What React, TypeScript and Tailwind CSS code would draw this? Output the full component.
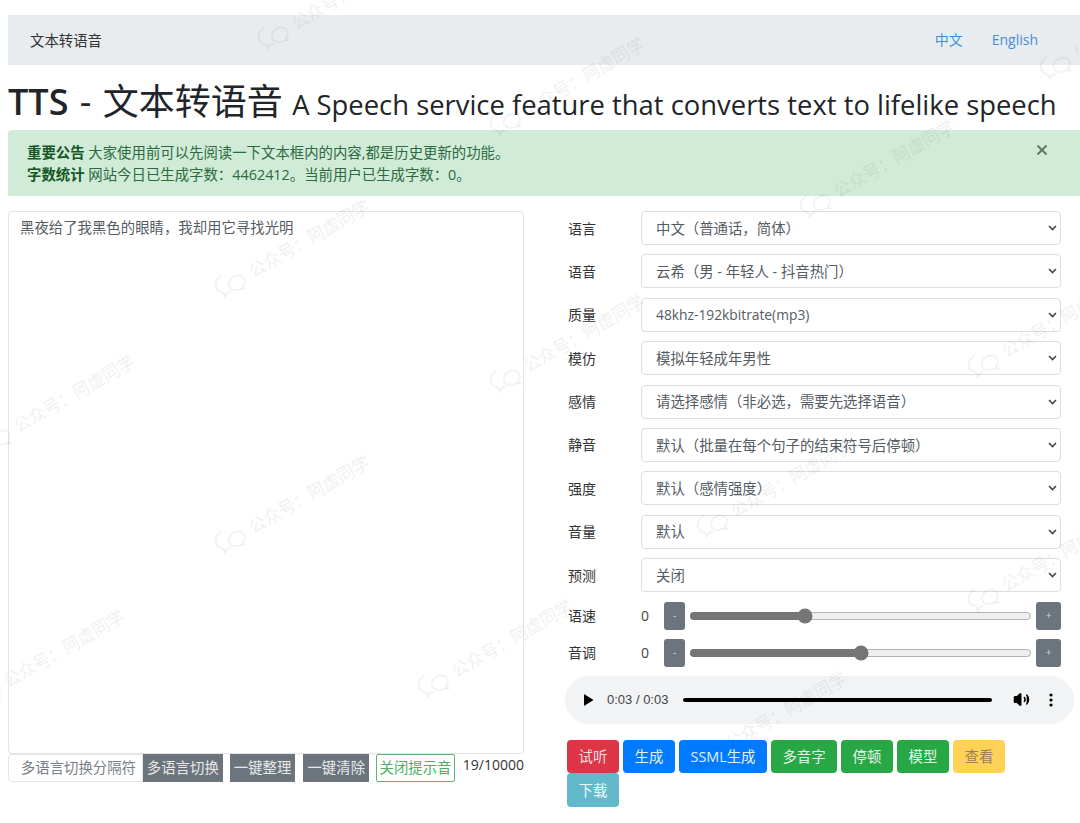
import { Volume2 } from "lucide-react";

const FONT = "font-['Open_Sans','Noto_Sans_CJK_SC',sans-serif]";

const selectRows = [
  { label: "语言", value: "中文（普通话，简体）", size: "text-[14.4px]" },
  { label: "语音", value: "云希（男 - 年轻人 - 抖音热门）", size: "text-[14.4px]" },
  { label: "质量", value: "48khz-192kbitrate(mp3)", size: "text-[13.8px]" },
  { label: "模仿", value: "模拟年轻成年男性", size: "text-[14.4px]" },
  { label: "感情", value: "请选择感情（非必选，需要先选择语音）", size: "text-[14.4px]" },
  { label: "静音", value: "默认（批量在每个句子的结束符号后停顿）", size: "text-[14.4px]" },
  { label: "强度", value: "默认（感情强度）", size: "text-[14.4px]" },
  { label: "音量", value: "默认", size: "text-[14.4px]" },
  { label: "预测", value: "关闭", size: "text-[14.4px]" },
];

const sliders = [
  { label: "语速", percent: 33 },
  { label: "音调", percent: 50 },
];

const actions = [
  { text: "试听", color: "bg-[#dc3545] text-[#f6dfe1]", width: "w-[52px]" },
  { text: "生成", color: "bg-[#007bff] text-[#e4f0ff]", width: "w-[52px]" },
  { text: "SSML生成", color: "bg-[#007bff] text-[#e4f0ff]", width: "w-[88px]" },
  { text: "多音字", color: "bg-[#28a745] text-[#e4f4e8]", width: "w-[66px]" },
  { text: "停顿", color: "bg-[#28a745] text-[#e4f4e8]", width: "w-[52px]" },
  { text: "模型", color: "bg-[#28a745] text-[#e4f4e8]", width: "w-[52px]" },
  { text: "查看", color: "bg-[#ffd257] text-[#94835a]", width: "w-[52px]" },
  { text: "下载", color: "bg-[#63b9cc] text-[#eef8fa]", width: "w-[52px]" },
];

const watermarks = [
  "left-[258px] top-[30px]",
  "left-[490px] top-[116px]",
  "left-[800px] top-[198px]",
  "left-[1040px] top-[60px]",
  "left-[215px] top-[278px]",
  "left-[490px] top-[373px]",
  "left-[968px] top-[358px]",
  "left-[697px] top-[518px]",
  "left-[215px] top-[534px]",
  "left-[968px] top-[592px]",
  "left-[418px] top-[678px]",
  "left-[692px] top-[750px]",
  "left-[-20px] top-[433px]",
  "left-[-30px] top-[688px]",
];

const Watermark = ({ place }: { place: string }) => (
  <div className={`absolute flex items-center gap-1 origin-left -rotate-[30deg] blur-[0.6px] text-[17px] leading-none whitespace-nowrap text-black/[0.07] ${place}`}>
    <svg width="36" height="28" viewBox="0 0 36 28" fill="none" stroke="currentColor" strokeWidth="1.4">
      <path d="M14 3c-6 0-11 4-11 9 0 3 2 5 4 7l-1 4 4-2c1 .4 3 .6 4 .6" />
      <path d="M24 10c-5 0-9 3-9 7s4 7 9 7l4 2-1-3c3-1 5-3 5-6 0-4-4-7-8-7z" />
    </svg>
    <span>公众号：阿虚同学</span>
  </div>
);

const SelectRow = ({ label, value, size }: { label: string; value: string; size: string }) => (
  <div className="flex items-center h-[34px] mb-[9.4px]">
    <label className="w-[74px] pl-[1px] text-[14px] text-[#333]">{label}</label>
    <div className="relative flex-1">
      <select
        defaultValue={value}
        className={`block w-full h-[34px] pl-[14px] pr-5 pt-[1px] appearance-none rounded border border-[#dadee2] bg-white text-[#555c63] ${size}`}
      >
        <option>{value}</option>
      </select>
      <svg width="9" height="6" viewBox="0 0 9 6" className="absolute right-[4px] top-[14px]" fill="none" stroke="#444" strokeWidth="1.6">
        <path d="M1 1l3.5 3.5L8 1" />
      </svg>
    </div>
  </div>
);

const SliderRow = ({ label, percent }: { label: string; percent: number }) => (
  <div className="flex items-center h-[28px] mb-[9px]">
    <label className="w-[74px] pl-[1px] text-[14px] text-[#333]">{label}</label>
    <span className="w-[23px] text-[14px] text-[#444]">0</span>
    <button className="w-[21px] h-[28px] rounded-[3px] bg-[#6c757d] text-[#cfd3d6] text-[10px]">-</button>
    <input
      type="range"
      defaultValue={percent}
      className="flex-1 min-w-0 mx-1 accent-[#757575]"
    />
    <button className="w-[25px] h-[28px] rounded-[3px] bg-[#6c757d] text-[#cfd3d6] text-[10px]">+</button>
  </div>
);

const AudioBar = () => (
  <div className="flex items-center h-[48px] w-[509px] -ml-[2px] mt-[3px] rounded-[24px] bg-[#f1f3f4] text-black">
    <svg width="12" height="14" viewBox="0 0 12 14" className="ml-[18px]">
      <path d="M1 1v12l9.5-6z" fill="currentColor" />
    </svg>
    <span className="ml-[12px] text-[13px] text-[#444] font-['Liberation_Sans',sans-serif]">0:03 / 0:03</span>
    <div className="ml-[15px] w-[309px] h-[4px] rounded-full bg-black" />
    <Volume2 size={17} fill="currentColor" strokeWidth={2} className="ml-[21px]" />
    <svg width="4" height="14" viewBox="0 0 4 14" className="ml-[19px]">
      <circle cx="2" cy="2" r="1.6" />
      <circle cx="2" cy="7" r="1.6" />
      <circle cx="2" cy="12" r="1.6" />
    </svg>
  </div>
);

const App = () => {
  return (
    <div className={`relative h-[823px] w-[1080px] overflow-hidden bg-white pl-2 pt-[15px] ${FONT}`}>
      <nav className="flex items-center justify-between h-[50px] pb-[2px] bg-[#e9ecef] pl-[22px] pr-[42px] text-[14px]">
        <span className="pt-[3px] text-[14.4px] text-[#333]">文本转语音</span>
        <div className="flex gap-[29px] text-[#3f8fd6]">
          <span>中文</span>
          <span>English</span>
        </div>
      </nav>

      <h1 className="mt-[14px] h-[51px] leading-[46px] text-[#212529] whitespace-nowrap">
        <span className="text-[36px] font-semibold">TTS</span>
        <span className="text-[36px] [word-spacing:2px]"> - 文本转语音</span>
        <span className="text-[36px]"> </span>
        <small className="text-[27.4px]">A Speech service feature that converts text to lifelike speech</small>
      </h1>

      <div className="relative h-[66px] bg-[#d0ebd8] pl-[19px] pt-[12px] text-[14.4px] leading-[21.6px] text-[#2d6a3e] rounded-tl">
        <p><b className="text-[#155724]">重要公告</b> 大家使用前可以先阅读一下文本框内的内容,都是历史更新的功能。</p>
        <p><b className="text-[#155724]">字数统计</b> 网站今日已生成字数：4462412。当前用户已生成字数：0。</p>
        <svg width="10" height="10" viewBox="0 0 10 10" className="absolute right-[33px] top-[15px]" stroke="#5f7a66" strokeWidth="2">
          <path d="M0.5 0.5l9 9M9.5 0.5l-9 9" />
        </svg>
      </div>

      <div className="flex mt-[15px]">
        <div className="w-[516px]">
          <textarea
            defaultValue="黑夜给了我黑色的眼睛，我却用它寻找光明"
            className="block w-full h-[543px] resize-none rounded border border-[#e2e5e8] px-[11px] py-[5px] text-[14.4px] text-[#555c63] outline-none"
          />
          <div className="flex items-start text-[14.4px] whitespace-nowrap">
            <div className="w-[135.5px] h-[28px] flex items-center justify-end pr-[6px] rounded-l border border-[#e2e5e8] text-[#777e85]">
              多语言切换分隔符
            </div>
            <button className="w-[80px] h-[28px] bg-[#6c757d] text-[#e8e8e8]">多语言切换</button>
            <button className="ml-[7px] w-[66px] h-[28px] bg-[#6c757d] text-[#e8e8e8]">一键整理</button>
            <button className="ml-[8px] w-[66px] h-[28px] bg-[#6c757d] text-[#e8e8e8]">一键清除</button>
            <button className="ml-[7px] w-[79px] h-[28px] border border-[#5fb576] rounded-[2px] text-[#4caf65]">关闭提示音</button>
            <span className="ml-2 text-[14px] text-[#333] leading-[22px]">19/10000</span>
          </div>
        </div>

        <div className="w-[494px] ml-[43px]">
          {selectRows.map((row) => (
            <SelectRow key={row.label} label={row.label} value={row.value} size={row.size} />
          ))}
          {sliders.map((s) => (
            <SliderRow key={s.label} label={s.label} percent={s.percent} />
          ))}
          <AudioBar />
          <div className="flex flex-wrap gap-x-[4px] mt-[16px] w-[480px]">
            {actions.map((a) => (
              <button key={a.text} className={`h-[33.5px] pt-[2px] rounded text-[14.4px] ${a.width} ${a.color}`}>
                {a.text}
              </button>
            ))}
          </div>
        </div>
      </div>

      <div className="absolute inset-0 pointer-events-none">
        {watermarks.map((place) => (
          <Watermark key={place} place={place} />
        ))}
      </div>
    </div>
  );
};

export default App;
